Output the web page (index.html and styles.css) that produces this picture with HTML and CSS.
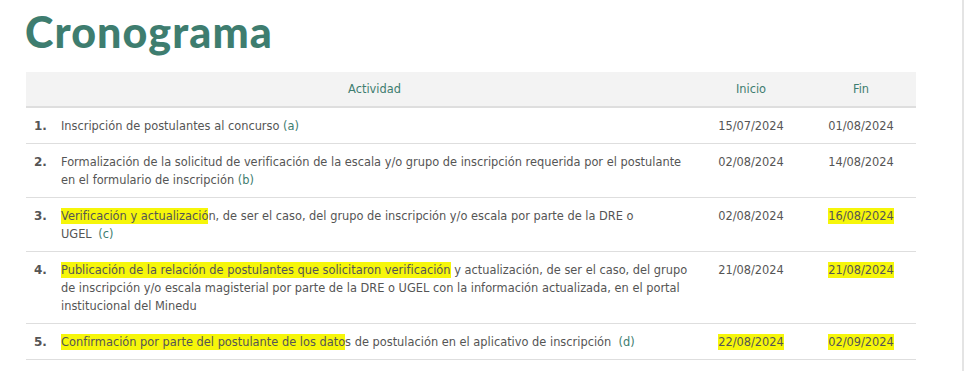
FILE: index.html
```html
<!DOCTYPE html>
<html lang="es">
<head>
<meta charset="utf-8">
<link rel="stylesheet" href="styles.css">
</head>
<body>
<div class="page">
  <h1 class="title">Cronograma</h1>
  <table class="crono">
    <thead>
      <tr>
        <th class="c-num"></th>
        <th class="c-act">Actividad</th>
        <th class="c-date">Inicio</th>
        <th class="c-date">Fin</th>
      </tr>
    </thead>
    <tbody>
      <tr>
        <td class="c-num">1.</td>
        <td class="c-act">Inscripción de postulantes al concurso <a class="ref">(a)</a></td>
        <td class="c-date">15/07/2024</td>
        <td class="c-date">01/08/2024</td>
      </tr>
      <tr>
        <td class="c-num">2.</td>
        <td class="c-act">Formalización de la solicitud de verificación de la escala y/o grupo de inscripción requerida por el postulante en el formulario de inscripción <a class="ref">(b)</a></td>
        <td class="c-date">02/08/2024</td>
        <td class="c-date">14/08/2024</td>
      </tr>
      <tr>
        <td class="c-num">3.</td>
        <td class="c-act"><span class="hl">Verificación y actualizació</span>n, de ser el caso, del grupo de inscripción y/o escala por parte de la DRE o UGEL&nbsp;<a class="ref ref-gap">(c)</a></td>
        <td class="c-date">02/08/2024</td>
        <td class="c-date"><span class="hl">16/08/2024</span></td>
      </tr>
      <tr>
        <td class="c-num">4.</td>
        <td class="c-act"><span class="hl">Publicación de la relación de postulantes que solicitaron verificación</span> y actualización, de ser el caso, del grupo de inscripción y/o escala magisterial por parte de la DRE o UGEL con la información actualizada, en el portal institucional del Minedu</td>
        <td class="c-date">21/08/2024</td>
        <td class="c-date"><span class="hl">21/08/2024</span></td>
      </tr>
      <tr>
        <td class="c-num">5.</td>
        <td class="c-act"><span class="hl">Confirmación por parte del postulante de los dato</span>s de postulación en el aplicativo de inscripción &nbsp;<a class="ref">(d)</a></td>
        <td class="c-date"><span class="hl">22/08/2024</span></td>
        <td class="c-date"><span class="hl">02/09/2024</span></td>
      </tr>
    </tbody>
  </table>
</div>
<div class="scrollbar"></div>
</body>
</html>
```

FILE: styles.css
```css
html, body {
  margin: 0;
  padding: 0;
  background: #ffffff;
}
body {
  font-family: "DejaVu Sans", "Liberation Sans", sans-serif;
  color: #555555;
}
.page {
  padding: 8px 48px 0 26px;
}
.title {
  margin: 0 0 16px -1px;
  font-family: Lato, "Open Sans", sans-serif;
  font-weight: 900;
  font-size: 43px;
  line-height: 48px;
  letter-spacing: 1.1px;
  color: #3e7d6f;
}
.crono {
  width: 890px;
  border-collapse: collapse;
  font-size: 11.4px;
  line-height: 18px;
}
.crono thead tr {
  background: #f3f3f3;
}
.crono th {
  font-weight: normal;
  color: #3e7d6f;
  height: 34px;
  padding: 0;
  border-bottom: 2px solid #dedede;
  vertical-align: middle;
}
.crono td {
  padding: 9px 0 8px 0;
  border-bottom: 1px solid #dedede;
  vertical-align: top;
}
.c-num {
  width: 29px;
  text-align: left;
}
td.c-num {
  padding-left: 8px !important;
  width: 21px;
  font-weight: bold;
  font-size: 12px;
}
.c-act {
  text-align: left;
  padding-left: 6px !important;
  padding-right: 8px !important;
}
th.c-act {
  text-align: center;
}
.c-date {
  width: 110px;
  text-align: center;
}
.ref {
  color: #3e7d6f;
}
.ref-gap {
  margin-left: 3px;
}
.hl {
  background: #f6f60a;
  padding: 1px 0;
}
.scrollbar {
  position: fixed;
  top: 0;
  right: 0;
  width: 2px;
  height: 100%;
  background: #e4e4e4;
}
```
